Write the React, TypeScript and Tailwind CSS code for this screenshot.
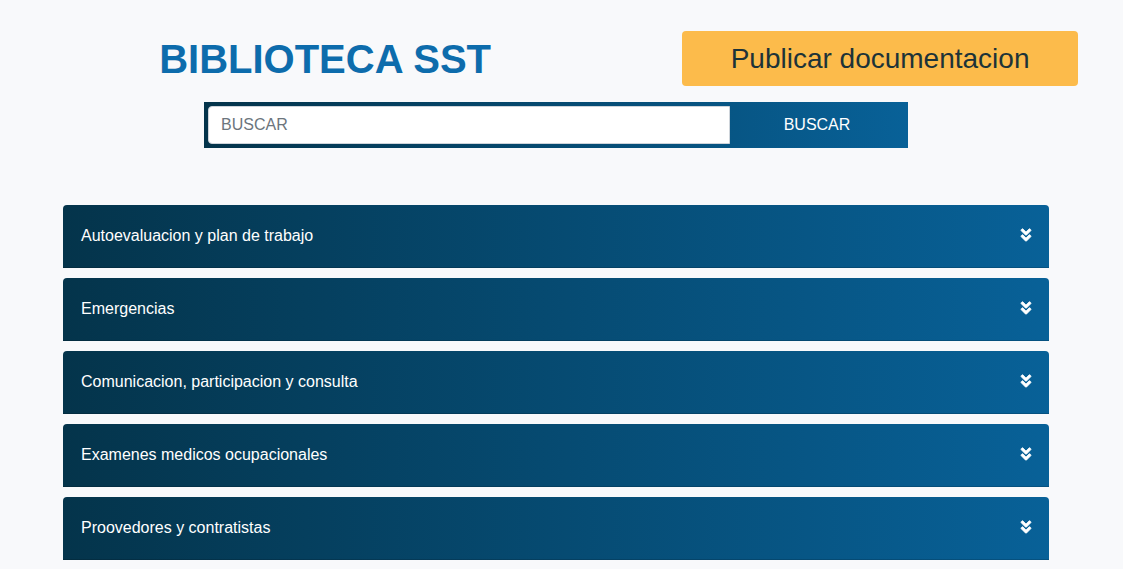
import React from "react";
import { FaAngleDoubleDown } from "react-icons/fa";

const sections = [
  "Autoevaluacion y plan de trabajo",
  "Emergencias",
  "Comunicacion, participacion y consulta",
  "Examenes medicos ocupacionales",
  "Proovedores y contratistas",
];

function SectionCard({ title }: { title: string }) {
  return (
    <li>
      <button
        type="button"
        className="flex h-[63px] w-full items-center justify-between rounded-t border-b border-black/15 bg-linear-to-r/srgb from-[#04344b] to-[#086198] pr-[15px] pb-px pl-[18px] text-left text-base text-white"
      >
        <span>{title}</span>
        <FaAngleDoubleDown
          aria-hidden="true"
          className="mb-0.5 size-4 stroke-white stroke-[24px]"
        />
      </button>
    </li>
  );
}

export default function App() {
  return (
    <main className="bg-[#f8f9fb] pr-[11px] pb-[9px] font-['Liberation_Sans',Arial,sans-serif]">
      <header className="grid grid-cols-[7fr_5fr] items-center gap-20 pt-[31px] pr-[34px] pl-12">
        <h1 className="text-center text-[40px] leading-12 font-bold text-[#0d6cac]">
          BIBLIOTECA SST
        </h1>
        <button
          type="button"
          className="h-[55px] rounded bg-[#fcbb4b] text-[28px] text-[#1d3338]"
        >
          Publicar documentacion
        </button>
      </header>

      <form
        role="search"
        onSubmit={(event) => event.preventDefault()}
        className="mx-auto mt-4 flex w-full max-w-[704px] bg-linear-to-r/srgb from-[#04344b] to-[#086198] p-1"
      >
        <input
          type="text"
          aria-label="Buscar"
          placeholder="BUSCAR"
          className="h-[38px] min-w-0 flex-1 rounded-l border border-[#ced4da] bg-white px-3 text-base text-gray-700 placeholder:text-[#6c757d]"
        />
        <button type="submit" className="w-[174px] text-base text-white">
          BUSCAR
        </button>
      </form>

      <ul className="mt-[57px] flex flex-col gap-2.5 px-[63px]">
        {sections.map((title) => (
          <SectionCard key={title} title={title} />
        ))}
      </ul>
    </main>
  );
}
